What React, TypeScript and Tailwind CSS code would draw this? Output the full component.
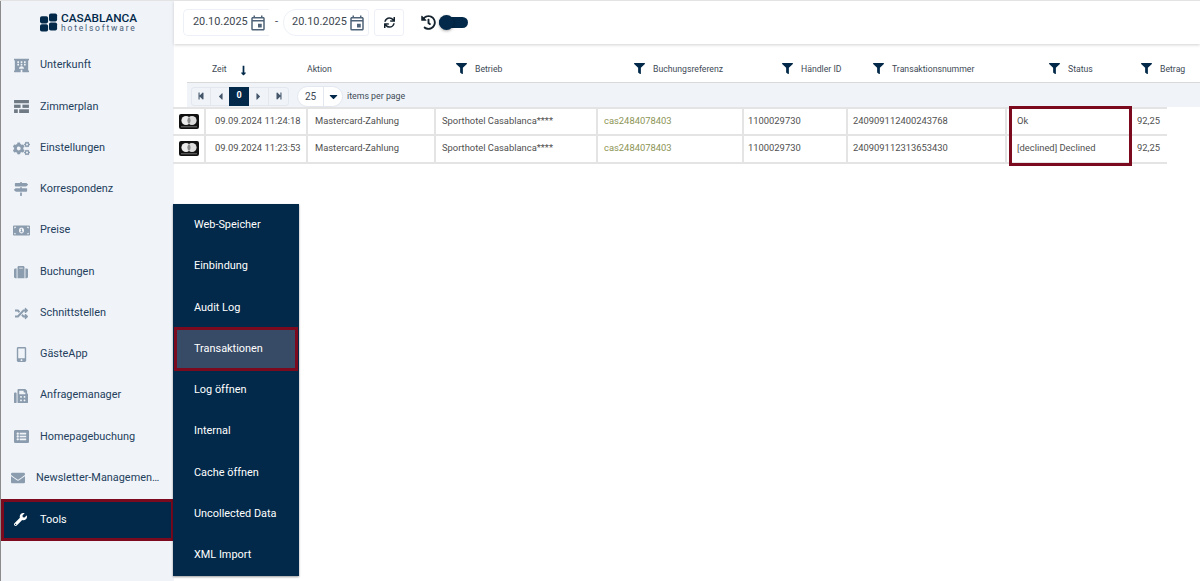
import { FaCogs, FaEnvelope, FaFax, FaFilter, FaHistory, FaListAlt, FaMapSigns, FaMoneyBillAlt, FaMobileAlt, FaRandom, FaSuitcase, FaSync, FaWrench, FaHotel, FaCaretDown, FaStepBackward, FaStepForward, FaCaretLeft, FaCaretRight, FaLongArrowAltDown } from 'react-icons/fa';
import { MdOutlineEvent } from 'react-icons/md';

const FONT = 'font-["Roboto",sans-serif]';

function PlanIcon({ className }: { className?: string }) {
  return (
    <svg viewBox="0 0 16 14" className={className} fill="currentColor">
      <rect x="0" y="0" width="16" height="3.5" />
      <rect x="0" y="5" width="7" height="3.5" />
      <rect x="9" y="5" width="7" height="3.5" />
      <rect x="0" y="10" width="4" height="4" />
      <rect x="5.5" y="10" width="10.5" height="4" />
    </svg>
  );
}

const menu = [
  { label: 'Unterkunft', icon: <FaHotel className="h-[15px] w-[15px]" /> },
  { label: 'Zimmerplan', icon: <PlanIcon className="h-[13px] w-[15px] text-[#6f7a85]" /> },
  { label: 'Einstellungen', icon: <FaCogs className="h-[17px] w-[17px]" /> },
  { label: 'Korrespondenz', icon: <FaMapSigns className="h-[14px] w-[14px]" /> },
  { label: 'Preise', icon: <FaMoneyBillAlt className="h-[17px] w-[17px]" /> },
  { label: 'Buchungen', icon: <FaSuitcase className="h-[14px] w-[14px]" /> },
  { label: 'Schnittstellen', icon: <FaRandom className="h-[13px] w-[13px]" /> },
  { label: 'GästeApp', icon: <FaMobileAlt className="h-[15px] w-[15px]" /> },
  { label: 'Anfragemanager', icon: <FaFax className="h-[14px] w-[14px]" /> },
  { label: 'Homepagebuchung', icon: <FaListAlt className="h-[15px] w-[15px]" /> },
];

const subMenu = ['Web-Speicher', 'Einbindung', 'Audit Log', 'Transaktionen', 'Log öffnen', 'Internal', 'Cache öffnen', 'Uncollected Data', 'XML Import'];

const rows = [
  { time: '09.09.2024 11:24:18', nr: '240909112400243768', status: 'Ok' },
  { time: '09.09.2024 11:23:53', nr: '240909112313653430', status: '[declined] Declined' },
];

function DateField({ value, className }: { value: string; className: string }) {
  return (
    <div className={`flex h-[27px] w-[86px] items-center justify-between border border-[#edf1f7] pr-[2px] text-[10.9px] text-[#3c4650] ${className}`}>
      {value}
      <MdOutlineEvent className="h-[18px] w-[18px] text-[#4f6478]" />
    </div>
  );
}

function HeaderCell({ label, width, filter }: { label: string; width: string; filter?: boolean }) {
  return (
    <div className={`flex items-center ${width}`}>
      {filter && <FaFilter className="mr-[8px] h-[11px] w-[11px] shrink-0 text-[#02294a]" />}
      <span className="mt-[2px] whitespace-nowrap text-[8.7px] text-[#3e4a56]">{label}</span>
    </div>
  );
}

function Cell({ children, width, className = '' }: { children?: React.ReactNode; width: string; className?: string }) {
  return (
    <div className={`flex h-full items-center whitespace-nowrap border-r-2 border-[#e4e4e4] pb-[1px] text-[9.4px] text-[#4f4f4f] ${width} ${className}`}>
      {children}
    </div>
  );
}

function CardIcon() {
  return (
    <svg viewBox="0 0 20 15" className="h-[15px] w-[20px]">
      <rect x="0" y="0" width="20" height="15" rx="2" fill="#111" />
      <circle cx="7" cy="6.5" r="4.6" fill="#ececec" />
      <circle cx="13" cy="6.5" r="4.6" fill="#dcdcdc" />
      <path d="M10 3a4.6 4.6 0 0 1 0 7a4.6 4.6 0 0 1 0-7z" fill="#8c8c8c" />
      <rect x="2" y="12" width="16" height="1.4" fill="#555" />
    </svg>
  );
}

export default function App() {
  return (
    <div className={`relative flex h-[581px] w-[1200px] overflow-hidden border-t border-[#e3e3e3] bg-white ${FONT}`}>
      {/* Sidebar */}
      <aside className="flex h-full w-[174px] shrink-0 flex-col border-l border-[#8b8b8b] bg-[#f0f4f9]">
        <div className="flex h-[44px] shrink-0 items-center pb-[1px] pl-[39px]">
          <svg viewBox="0 0 20 20" className="mr-[3px] h-[19px] w-[18px]">
            <rect x="0" y="3" width="9" height="8" rx="2" fill="#02294a" />
            <rect x="10" y="0" width="9" height="9" rx="2" fill="#02294a" />
            <rect x="0" y="12" width="9" height="8" rx="2" fill="#02294a" />
            <rect x="10" y="10" width="9" height="9" rx="2" fill="#02294a" />
          </svg>
          <div className="flex flex-col leading-none">
            <span className="text-[11.8px] font-medium leading-[11px] text-[#02294a]">CASABLANCA</span>
            <span className="text-[8.5px] leading-[8px] tracking-[1.8px] text-[#4a6078]">hotelsoftware</span>
          </div>
        </div>
        {menu.map((m) => (
          <div key={m.label} className="flex h-[41.25px] shrink-0 items-center text-[#8b9cae]">
            <span className="flex w-[39px] shrink-0 justify-center pl-[1px]">{m.icon}</span>
            <span className="text-[10.9px] text-[#24405c]">{m.label}</span>
          </div>
        ))}
        <div className="flex h-[41.25px] shrink-0 items-center text-[#8b9cae]">
          <span className="flex w-[35px] shrink-0 justify-center pr-[1px]"><FaEnvelope className="h-[14px] w-[14px]" /></span>
          <span className="w-[125px] truncate text-[10.9px] text-[#24405c]">Newsletter-Managementsystem</span>
        </div>
        <div className="flex h-[42px] shrink-0 items-center border-[3px] border-[#7b0a1e] bg-[#02294a] text-white">
          <span className="flex w-[36px] shrink-0 justify-center pr-[3px]"><FaWrench className="h-[13px] w-[13px]" /></span>
          <span className="text-[10.9px]">Tools</span>
        </div>
      </aside>

      {/* Tools submenu */}
      <div className="absolute left-[173px] top-[203px] z-10 flex h-[372px] w-[126px] flex-col bg-[#02294a] pt-[0.6px] shadow-[0_1px_2px_rgba(0,0,0,0.4)]">
        {subMenu.map((s) =>
          s === 'Transaktionen' ? (
            <div key={s} className="-my-[1.4px] mx-[1px] flex h-[44px] shrink-0 items-center border-[3px] border-[#7b0a1e] bg-[#374a66] pl-[17px] text-[10.9px] text-white">
              {s}
            </div>
          ) : (
            <div key={s} className="flex h-[41.25px] shrink-0 items-center pl-[21px] text-[10.9px] text-white">
              {s}
            </div>
          ),
        )}
      </div>

      {/* Main */}
      <main className="relative flex min-w-0 flex-1 flex-col">
        <div className="flex h-[43px] shrink-0 items-center pl-[9px] shadow-[0_1px_3px_rgba(0,0,0,0.18)]">
          <DateField value="20.10.2025" className="rounded-l-[5px] border-r-0 pl-[9px]" />
          <span className="ml-[6px] mr-[5px] text-[11px] text-[#3c4650]">-</span>
          <DateField value="20.10.2025" className="rounded-l-[13px] rounded-r-[3px] pl-[8px]" />
          <div className="ml-[5px] flex h-[27px] w-[30px] items-center justify-center rounded-[3px] border border-[#edf1f7]">
            <FaSync className="h-[11px] w-[11px] text-[#14222e]" />
          </div>
          <FaHistory className="ml-[17px] h-[15px] w-[15px] text-[#14222e]" />
          <div className="relative ml-[3px] h-[11px] w-[29px] rounded-full bg-[#02294a]">
            <span className="absolute -top-[2px] left-0 h-[15px] w-[15px] rounded-full bg-[#02294a] shadow-[0_1px_3px_rgba(0,0,0,0.35)]" />
          </div>
        </div>

        <div className="ml-[13px] mt-[11px] w-[1013px]">
          {/* Column headers */}
          <div className="flex h-[28px] items-end border-b border-[#d9d9d9] pb-[6px]">
            <div className="flex w-[120px] items-center pl-[25px] text-[8.7px] text-[#3e4a56]">
              <span className="mt-[1px]">Zeit</span>
              <FaLongArrowAltDown className="ml-[11px] mt-[3px] h-[11px] w-[11px] text-[#02294a]" />
            </div>
            <HeaderCell label="Aktion" width="w-[149px]" />
            <HeaderCell label="Betrieb" width="w-[178px]" filter />
            <HeaderCell label="Buchungsreferenz" width="w-[148px]" filter />
            <HeaderCell label="Händler ID" width="w-[91px]" filter />
            <HeaderCell label="Transaktionsnummer" width="w-[176px]" filter />
            <HeaderCell label="Status" width="w-[92px]" filter />
            <HeaderCell label="Betrag" width="w-[59px]" filter />
          </div>

          {/* Pager */}
          <div className="flex h-[24px] items-center bg-[#f0f4f9] pl-[4px] pt-[2px] text-[#3e4a56]">
            <div className="flex h-[19px] items-center rounded-[3px] border border-[#e3e8ef]">
              <span className="flex h-full w-[19px] items-center justify-center border-r border-[#e3e8ef]"><FaStepBackward className="h-[8px] w-[8px] text-[#44566a]" /></span>
              <span className="flex h-full w-[18px] items-center justify-center"><FaCaretLeft className="h-[11px] w-[11px] text-[#44566a]" /></span>
              <span className="flex h-[19px] w-[20px] items-center justify-center bg-[#02294a] text-[9px] font-bold text-white">0</span>
              <span className="flex h-full w-[20px] items-center justify-center border-r border-[#e3e8ef]"><FaCaretRight className="h-[11px] w-[11px] text-[#44566a]" /></span>
              <span className="flex h-full w-[19px] items-center justify-center"><FaStepForward className="h-[8px] w-[8px] text-[#44566a]" /></span>
            </div>
            <div className="ml-[8px] flex h-[21px] w-[46px] items-center rounded-full border border-[#e3e8ef] bg-white">
              <span className="w-[26px] border-r border-[#e3e8ef] text-center text-[10px] leading-[19px]">25</span>
              <FaCaretDown className="ml-[3px] h-[13px] w-[13px] text-[#02294a]" />
            </div>
            <span className="ml-[4px] mt-[1px] text-[8.8px]">items per page</span>
          </div>

          {/* Rows */}
          <div className="-ml-[14px] w-[994px] border-y-2 border-[#e4e4e4]">
            {rows.map((r, i) => (
              <div key={r.nr} className={`flex items-center ${i === 0 ? 'h-[27px] border-b-2 border-[#e4e4e4]' : 'h-[26px]'}`}>
                <Cell width="w-[33px]" className="justify-center"><CardIcon /></Cell>
                <Cell width="w-[102px]" className="pl-[9px]">{r.time}</Cell>
                <Cell width="w-[128px]" className="pl-[7px]">Mastercard-Zahlung</Cell>
                <Cell width="w-[162px]" className="pl-[6px]">Sporthotel Casablanca****</Cell>
                <Cell width="w-[146px]" className="pl-[6px] text-[#8b9455]">cas2484078403</Cell>
                <Cell width="w-[104px]" className="pl-[4px]">1100029730</Cell>
                <Cell width="w-[159px]" className="pl-[5px]">{r.nr}</Cell>
                <Cell width="w-[125px]" className="pl-[10px]">{r.status}</Cell>
                <div className="flex h-full items-center pb-[1px] pl-[5px] text-[9.4px] text-[#4f4f4f]">92,25</div>
              </div>
            ))}
          </div>
        </div>

        {/* Status highlight */}
        <div className="pointer-events-none absolute left-[835px] top-[105px] h-[60px] w-[123px] border-[3px] border-[#7b0a1e]" />
      </main>
    </div>
  );
}
